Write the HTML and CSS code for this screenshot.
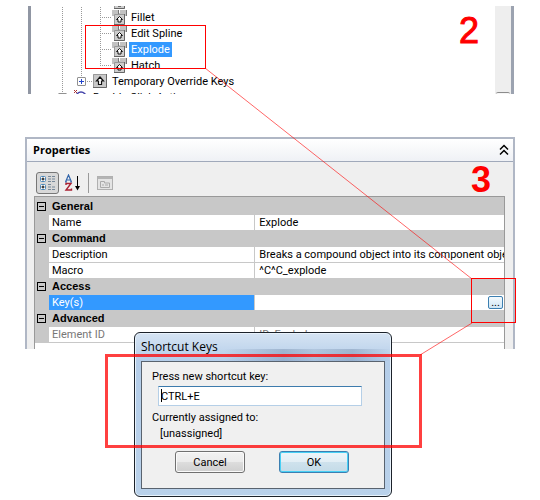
FILE: index.html
```html
<!DOCTYPE html>
<html lang="en">
<head>
  <meta charset="utf-8">
  <title>Shortcut Keys</title>
  <link rel="stylesheet" href="styles.css">
</head>
<body>
  <svg class="symbols" aria-hidden="true">
    <symbol id="icon-key" viewBox="0 0 16 16">
      <rect x="1" y="1" width="14" height="14" fill="#c8c8c8"/>
      <path d="M1 14.500H14.500V1" fill="none" stroke="#666"/>
      <path d="M1.500 14V1.500H14" fill="none" stroke="#999"/>
      <path d="M8 4L11.500 8H9.500V11.500H6.500V8H4.500Z" fill="#fff" stroke="#111" stroke-width="1.200"/>
    </symbol>
    <symbol id="icon-shortcut" viewBox="0 0 16 16">
      <path d="M1 1H7V4H9V1H15V7H1Z" fill="#c2c2c2"/>
      <path d="M7.500 1V5M15.500 1V7" fill="none" stroke="#777"/>
      <rect x="3" y="5" width="11" height="11" fill="#cdcdcd"/>
      <path d="M3.500 16V5.500H13" fill="none" stroke="#999"/>
      <path d="M3 15.500H13.500V5" fill="none" stroke="#666"/>
      <path d="M8.500 7.500L11.500 10.500H10V13H7V10.500H5.500Z" fill="#fff" stroke="#111"/>
    </symbol>
  </svg>

  <div class="tree-pane">
    <ul class="tree">
      <li class="row"><i class="line"></i><i class="line"></i><i class="line tee"></i><svg class="icon"><use href="#icon-shortcut"/></svg></li>
      <li class="row"><i class="line"></i><i class="line"></i><i class="line tee"></i><svg class="icon"><use href="#icon-shortcut"/></svg><span class="label">Fillet</span></li>
      <li class="row"><i class="line"></i><i class="line"></i><i class="line tee"></i><svg class="icon"><use href="#icon-shortcut"/></svg><span class="label">Edit Spline</span></li>
      <li class="row"><i class="line"></i><i class="line"></i><i class="line tee"></i><svg class="icon"><use href="#icon-shortcut"/></svg><span class="label selected">Explode</span></li>
      <li class="row"><i class="line"></i><i class="line"></i><i class="line tee end"></i><svg class="icon"><use href="#icon-shortcut"/></svg><span class="label">Hatch</span></li>
      <li class="row"><i class="line"></i><i class="line tee end"><b class="expand"></b></i><svg class="icon"><use href="#icon-key"/></svg><span class="label">Temporary Override Keys</span></li>
      <li class="row"><i class="line tee"><b class="expand"></b></i><svg class="icon" viewBox="0 0 16 16"><path d="M1 1L4 4M4 1L1 4" stroke="#a33"/><circle cx="8" cy="8" r="5" fill="none" stroke="#44a" stroke-width="1.500"/></svg><span class="label">Double Click Actions</span></li>
    </ul>
    <div class="scrollbar"><div class="thumb"></div></div>
  </div>

  <div class="panel">
    <div class="panel-header">
      <span>Properties</span>
      <svg class="chevron" viewBox="0 0 10 12"><path d="M1 5.500L5 1.500L9 5.500M1 10.500L5 6.500L9 10.500" fill="none" stroke="#000" stroke-width="1.500"/></svg>
    </div>
    <div class="toolbar">
      <button class="tool active" aria-label="Categorized">
        <svg width="18" height="18" viewBox="0 0 18 18">
          <rect x="1.500" y="2.500" width="5" height="5" rx="1" fill="#fff" stroke="#4a86b8"/>
          <rect x="1.500" y="10.500" width="5" height="5" rx="1" fill="#fff" stroke="#4a86b8"/>
          <path d="M2.500 5H5.500M4 3.500V6.500M2.500 13H5.500M4 11.500V14.500" stroke="#000"/>
          <path d="M9 2.500H12M13 2.500H16M9 5H12M13 5H16M9 7.500H12M13 7.500H16M9 10.500H12M9 13H12M13 13H16M9 15.500H12M13 15.500H16" stroke="#789"/>
        </svg>
      </button>
      <button class="tool" aria-label="Alphabetical">
        <svg width="18" height="18" viewBox="0 0 18 18">
          <path d="M1.500 8L4.500 1L7.500 8M3 6H6M1 8H3M6 8H8" fill="none" stroke="#36a" stroke-width="1.200"/>
          <path d="M2 11V9.500H7L2 16H7.500V14.500" fill="none" stroke="#a23" stroke-width="1.400"/>
          <path d="M13.500 2V14" stroke="#000"/>
          <path d="M11 12H16L13.500 16.500Z"/>
        </svg>
      </button>
      <div class="separator"></div>
      <button class="tool" aria-label="Property Pages" disabled>
        <svg width="18" height="18" viewBox="0 0 18 18">
          <rect x="1.500" y="2.500" width="15" height="13" fill="#e4e4e4" stroke="#b0b0b0"/>
          <path d="M2 4H16" stroke="#b4b4b4" stroke-width="2"/>
          <path d="M4.500 7.500H8.500V9H13.500V13.500H4.500ZM6 11H8M9 11H12" fill="none" stroke="#aaa"/>
        </svg>
      </button>
    </div>
    <div class="grid-box">
      <table class="grid">
        <colgroup><col class="col-gutter"><col class="col-name"><col></colgroup>
        <tbody>
          <tr class="group"><td class="gutter"><b class="collapse"></b></td><th colspan="2">General</th></tr>
          <tr><td class="gutter"></td><td class="name">Name</td><td>Explode</td></tr>
          <tr class="group"><td class="gutter"><b class="collapse"></b></td><th colspan="2">Command</th></tr>
          <tr><td class="gutter"></td><td class="name">Description</td><td>Breaks a compound object into its component objects</td></tr>
          <tr><td class="gutter"></td><td class="name">Macro</td><td>^C^C_explode</td></tr>
          <tr class="group"><td class="gutter"><b class="collapse"></b></td><th colspan="2">Access</th></tr>
          <tr><td class="gutter"></td><td class="name current">Key(s)</td><td class="value-edit"><button class="browse">...</button></td></tr>
          <tr class="group"><td class="gutter"><b class="collapse"></b></td><th colspan="2">Advanced</th></tr>
          <tr class="readonly"><td class="gutter"></td><td class="name">Element ID</td><td>ID_Explode</td></tr>
        </tbody>
      </table>
    </div>
  </div>

  <div class="dialog">
    <div class="dialog-title">Shortcut Keys</div>
    <form class="dialog-body">
      <label for="key">Press new shortcut key:</label>
      <div class="key-box"><input id="key" type="text" value="CTRL+E"><i class="caret"></i></div>
      <div>Currently assigned to:</div>
      <div class="assigned">[unassigned]</div>
      <div class="buttons">
        <button type="button" class="btn">Cancel</button>
        <button type="button" class="btn primary">OK</button>
      </div>
    </form>
  </div>

  <!-- callouts -->
  <svg class="callouts" width="540" height="500" viewBox="0 0 540 500">
    <g fill="none" stroke="#f00">
      <path d="M205 68L472 279M472 323L420 355" stroke-opacity=".6"/>
      <rect x="85.500" y="25.500" width="120" height="43"/>
      <rect x="471.500" y="278.500" width="44" height="44"/>
      <rect x="106.500" y="355.500" width="314" height="91" stroke-width="3" stroke-opacity=".75"/>
    </g>
  </svg>
  <div class="step step-2">2</div>
  <div class="step step-3">3</div>
</body>
</html>
```
FILE: styles.css
```css
* {
  box-sizing: border-box;
}
body {
  position: relative;
  min-height: 100vh;
  margin: 0;
  padding: 6px 25px 0;
  background-color: #fff;
  color: #000;
  font-family: Roboto, sans-serif;
  font-size: 11px;
  line-height: 16px;
}
button, input {
  font-family: inherit;
  font-size: inherit;
}
.symbols {
  position: absolute;
  width: 0;
  height: 0;
}

/* tree */
.tree-pane {
  display: flex;
  justify-content: space-between;
  height: 88px;
  margin: 0 1px 0 3px;
  overflow: hidden;
  border-left: 3px solid #9096a3;
  border-right: 3px solid #9ca3b0;
}
.tree {
  list-style: none;
  margin: -13px 0 0;
  padding: 0 0 0 31px;
}
.row {
  display: flex;
  align-items: center;
  height: 16px;
  white-space: nowrap;
}
.line {
  position: relative;
  width: 19px;
  height: 16px;
  background: repeating-linear-gradient(#999 0 1px, transparent 1px 2px) 0 0 / 1px 100% no-repeat;
}
.line.tee {
  width: 11px;
}
.line.tee::after {
  content: "";
  position: absolute;
  left: 0;
  top: 8px;
  width: 11px;
  border-top: 1px dotted #999;
}
.line.end {
  background-size: 1px 8px;
}
.icon {
  width: 16px;
  height: 16px;
}
.label {
  margin-left: 2px;
  padding: 0 2px;
  line-height: 15px;
}
.selected {
  background-color: #3399ff;
  color: #fff;
}
.expand {
  position: absolute;
  z-index: 1;
  left: -4px;
  top: 4px;
  width: 9px;
  height: 9px;
  border: 1px solid #919191;
  border-radius: 1px;
  background:
    linear-gradient(#24c, #24c) 1px 3px / 5px 1px no-repeat,
    linear-gradient(#24c, #24c) 3px 1px / 1px 5px no-repeat,
    #fff;
}
.scrollbar {
  display: flex;
  align-items: flex-end;
  width: 16px;
  padding: 0 1px;
  background-color: #eee;
}
.thumb {
  width: 100%;
  height: 2px;
  border-top: 1px solid #8c8c8c;
  border-radius: 2px 2px 0 0;
  background-color: #f6f6f6;
}

/* properties */
.panel {
  display: flex;
  flex-direction: column;
  height: 212px;
  margin-top: 43px;
  overflow: hidden;
  border: 2px solid #b0b7c5;
  border-bottom: 0;
  background-color: #efefef;
}
.panel-header {
  display: flex;
  flex: none;
  align-items: center;
  justify-content: space-between;
  height: 23px;
  padding: 0 4px 0 6px;
  border-bottom: 1px solid #a0a9ba;
  background: linear-gradient(#fff, #eff1f5);
  font-family: "Open Sans", sans-serif;
  font-weight: bold;
}
.chevron {
  width: 10px;
  height: 12px;
}
.toolbar {
  display: flex;
  flex: none;
  align-items: center;
  gap: 2px;
  height: 34px;
  padding: 9px 9px 1px;
}
.tool {
  display: flex;
  align-items: center;
  justify-content: center;
  width: 23px;
  height: 22px;
  padding: 0;
  border: 1px solid transparent;
  border-radius: 3px;
  background: none;
}
.tool.active {
  border-color: #777;
  background-color: #d8d8d8;
}
.separator {
  width: 1px;
  height: 20px;
  margin: 0 2px;
  background-color: #999;
}
.grid-box {
  flex: 1;
  margin: 0 8px 0 7px;
  border: 1px solid #999;
  border-bottom: 0;
  background-color: #fff;
}
.grid {
  width: 100%;
  table-layout: fixed;
  border-collapse: separate;
  border-spacing: 0;
  border-top: 2px solid #c8c8c8;
}
.col-gutter {
  width: 14px;
}
.col-name {
  width: 44%;
}
.grid td, .grid th {
  height: 16px;
  padding: 0 0 0 4px;
  overflow: hidden;
  line-height: 15px;
  white-space: nowrap;
  text-align: left;
  border-bottom: 1px solid #c8c8c8;
}
.grid .name {
  padding-left: 3px;
  border-right: 1px solid #c8c8c8;
}
.grid .gutter {
  padding: 0 2px;
  background-color: #c8c8c8;
}
.grid th {
  padding-left: 3px;
  font-family: "Liberation Sans", sans-serif;
  background-color: #c8c8c8;
}
.grid .current {
  background-color: #3399ff;
  color: #fff;
}
.grid .readonly {
  color: #777;
}
.collapse {
  display: block;
  width: 9px;
  height: 9px;
  border: 1px solid #000;
  background: linear-gradient(#000, #000) 1px 3px / 5px 1px no-repeat;
}
.grid .value-edit {
  padding-right: 1px;
}
.browse {
  display: block;
  width: 15px;
  height: 13px;
  margin-left: auto;
  padding: 0;
  border: 1px solid #3c7fb1;
  border-radius: 2px;
  background: linear-gradient(#f4fafd, #cfe6f5);
  line-height: 9px;
}

/* dialog */
.dialog {
  position: absolute;
  left: 134px;
  top: 332px;
  width: 258px;
  padding: 0 6px 7px;
  border: 1px solid #1c222a;
  border-radius: 6px;
  background:
    linear-gradient(90deg, transparent 35%, rgba(80, 105, 140, .3) 58%, rgba(80, 105, 140, .15) 70%, rgba(80, 105, 140, .3) 85%, transparent) 0 16px / 100% 12px no-repeat,
    linear-gradient(#d6e4f3, #b4cde9 28px, #b9d1ea);
  box-shadow: inset 0 0 0 1px #e8f2fb;
}
.dialog-title {
  height: 28px;
  line-height: 28px;
  font-family: "Open Sans", sans-serif;
  font-size: 12px;
}
.dialog-body {
  height: 128px;
  padding: 7px 10px;
  border: 1px solid #59636f;
  background-color: #f0f0f0;
}
.dialog-body label {
  display: block;
}
.key-box {
  position: relative;
  width: 204px;
  margin: 1px 0 4px 6px;
}
.key-box input {
  display: block;
  width: 100%;
  height: 20px;
  padding: 0 2px;
  border: 1px solid #b5cfe7;
  border-top-color: #3d7bad;
  background-color: #fff;
}
.caret {
  position: absolute;
  left: 3px;
  top: 3px;
  width: 1px;
  height: 13px;
  background-color: #000;
}
.assigned {
  margin-left: 8px;
}
.buttons {
  display: flex;
  gap: 34px;
  margin: 9px 0 0 23px;
}
.btn {
  width: 70px;
  height: 22px;
  padding: 0;
  border: 1px solid #707070;
  border-radius: 3px;
  background: linear-gradient(#f2f2f2, #ebebeb 50%, #dddddd 50%, #cfcfcf);
  box-shadow: inset 0 0 0 1px #fafafa;
}
.btn.primary {
  border-color: #3c7fb1;
  background: linear-gradient(#eef5f9, #e2eef5 50%, #cfe2ed 50%, #c4dbe8);
  box-shadow: inset 0 0 0 1px #48d0f5;
}

/* callouts */
.callouts {
  position: absolute;
  left: 0;
  top: 0;
  pointer-events: none;
}
.step {
  position: absolute;
  color: #f00;
  font-family: "Liberation Sans", sans-serif;
  font-size: 36px;
  line-height: 36px;
}
.step-2 {
  left: 459px;
  top: 13px;
  -webkit-text-stroke: 1px #f00;
}
.step-3 {
  left: 471px;
  top: 162px;
  font-weight: bold;
}
```
